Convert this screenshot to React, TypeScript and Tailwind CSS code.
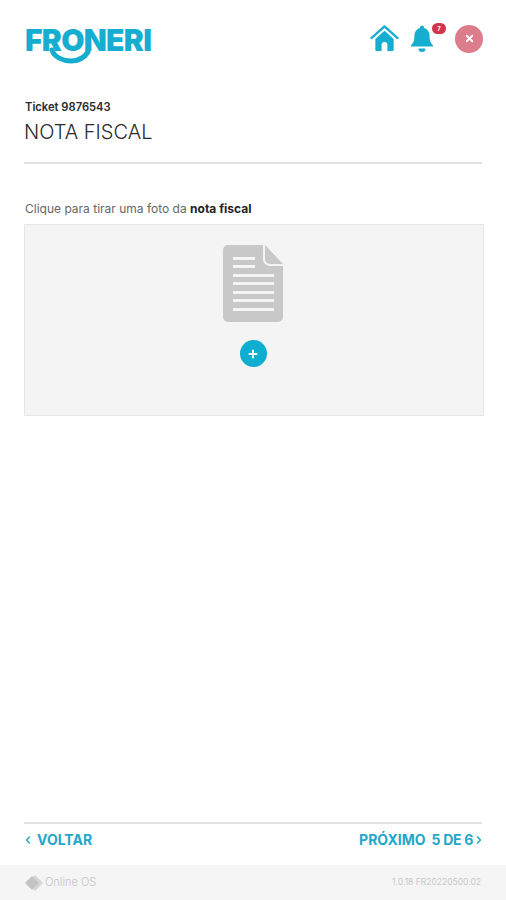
import { ChevronLeft, ChevronRight, X, Plus } from "lucide-react"

const font = { fontFamily: "Inter, 'Liberation Sans', sans-serif" }

function Logo() {
  return (
    <div className="relative h-[36px] w-[128px]">
      <span className="block text-[30px] leading-[24px] font-black tracking-[-0.7px] text-[#16aed0] font-['Inter',sans-serif]">
        FRONERI
      </span>
      <svg className="absolute left-0 top-0" width="128" height="36" viewBox="0 0 128 36" fill="none">
        <path d="M27 22c2 7 11 11 19 11s13-3 17-9" stroke="#16aed0" strokeWidth="5" strokeLinecap="round" />
      </svg>
    </div>
  )
}

function HomeIcon() {
  return (
    <svg width="29" height="29" viewBox="0 0 30 30" fill="none">
      <path d="M1.500 14.500 15 2.500l13.500 12" stroke="#16aed0" strokeWidth="2.400" strokeLinecap="round" strokeLinejoin="round" />
      <path
        fillRule="evenodd"
        d="M15 7 5.500 15.500V27a1 1 0 0 0 1 1h5.500v-6.500a3 3 0 0 1 6 0V28h5.500a1 1 0 0 0 1-1V15.500L15 7Z"
        fill="#16aed0"
      />
    </svg>
  )
}

function BellIcon() {
  return (
    <svg width="24" height="29" viewBox="0 0 24 28" fill="#16aed0">
      <path d="M12 1a2 2 0 0 1 2 2v.6c3.600 1 5.600 4 5.600 8 0 5 1.200 7 3.400 9.400v1H1v-1c2.200-2.400 3.400-4.400 3.400-9.400 0-4 2-7 5.600-8V3a2 2 0 0 1 2-2Z" />
      <path d="M8.500 24h7a3.500 3.500 0 0 1-7 0Z" />
    </svg>
  )
}

function DocIcon() {
  return (
    <svg width="60" height="77" viewBox="0 0 60 77">
      <path d="M5 0h35v14a7 7 0 0 0 7 7h13v51a5 5 0 0 1-5 5H5a5 5 0 0 1-5-5V5a5 5 0 0 1 5-5Z" fill="#c8c8c8" />
      <path d="M42 0 60 19H47a5 5 0 0 1-5-5V0Z" fill="#c8c8c8" />
      <g fill="#f4f4f4">
        <rect x="10" y="12" width="22" height="3" />
        <rect x="10" y="20" width="22" height="3" />
        <rect x="10" y="29" width="41" height="3" />
        <rect x="10" y="37" width="41" height="3" />
        <rect x="10" y="46" width="41" height="3" />
        <rect x="10" y="54" width="41" height="3" />
        <rect x="10" y="63" width="41" height="3" />
      </g>
    </svg>
  )
}

export default function App() {
  return (
    <div className="flex min-h-[900px] w-[506px] flex-col bg-white" style={font}>
      <header className="flex items-start justify-between pl-[25px] pr-[23px] pt-[28px]">
        <Logo />
        <div className="-mt-[4px] flex items-center">
          <HomeIcon />
          <div className="relative ml-[11px] mr-[21px]">
            <BellIcon />
            <span className="absolute -right-[12px] -top-[1px] flex h-[11px] w-[14px] items-center justify-center rounded-full bg-[#d2344c] text-[6px] font-bold text-white">
              7
            </span>
          </div>
          <button className="flex h-[28px] w-[28px] items-center justify-center rounded-full bg-[#dd7d8b]">
            <X size={11} strokeWidth={4} className="text-white" />
          </button>
        </div>
      </header>

      <main className="flex flex-1 flex-col px-[24px]">
        <div className="mt-[35px] border-b-2 border-[#e2e2e2] pb-[17px]">
          <p className="pl-px text-[11.200px] leading-[16px] font-semibold text-[#2a2a2a]">Ticket 9876543</p>
          <h1 className="mt-[4px] text-[20px] leading-[26px] font-light text-[#2a2a2a]">NOTA FISCAL</h1>
        </div>

        <p className="mt-[37px] pl-px text-[12px] leading-[16px] text-[#666]">
          Clique para tirar uma foto da <strong className="font-bold text-[#222]">nota fiscal</strong>
        </p>

        <div className="mt-[7px] flex h-[192px] w-[460px] flex-col items-center border border-[#e6e6e6] bg-[#f4f4f4] pr-[2px] pt-[20px]">
          <DocIcon />
          <div className="mt-[18px] flex h-[27px] w-[27px] items-center justify-center rounded-full bg-[#0daecf]">
            <Plus size={12} strokeWidth={4} className="text-white" />
          </div>
        </div>
      </main>

      <nav className="mx-[24px] flex h-[43px] items-start justify-between border-t-2 border-[#e2e2e2] pt-[6px] text-[14px] leading-[20px] font-bold text-[#22a7cc]">
        <span className="flex items-center gap-[3px]">
          <ChevronLeft size={12} strokeWidth={3} className="-ml-[2px]" />
          VOLTAR
        </span>
        <span className="flex items-center">
          PRÓXIMO<span className="ml-[6px] tracking-[-0.3px]">5 DE 6</span>
          <ChevronRight size={12} strokeWidth={3} className="-mr-[3px]" />
        </span>
      </nav>

      <footer className="flex h-[35px] items-center justify-between bg-[#f5f5f5] pl-[25px] pr-[25px]">
        <span className="flex items-center gap-[2px] text-[11px] font-light text-[#c4c4c4]">
          <svg width="18" height="16" viewBox="0 0 18 16">
            <path d="M10 0 18 8l-8 8-3-3 5-5-5-5 3-3Z" fill="#d6d6d6" />
            <path d="M7 1 14 8l-7 7-7-7 7-7Z" fill="#c4c4c4" />
          </svg>
          Online OS
        </span>
        <span className="text-[8.500px] text-[#c8c8c8]">1.0.18 FR20220500.02</span>
      </footer>
    </div>
  )
}
